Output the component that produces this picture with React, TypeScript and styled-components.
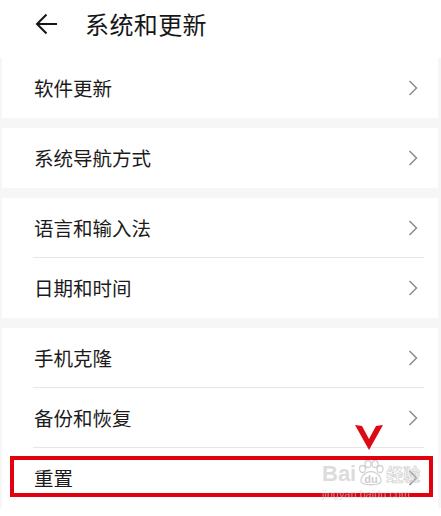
import React from 'react';
import styled, { createGlobalStyle } from 'styled-components';

const GlobalStyle = createGlobalStyle`
    html, body {
        margin: 0;
        padding: 0;
        background: #ffffff;
    }
    body {
        font-family: "Noto Sans CJK SC", "Noto Sans", sans-serif;
        color: #1b1b1b;
    }
`;

const Page = styled.div`
    width: 441px;
    height: 516px;
    overflow: hidden;
    background: #ffffff;
`;

const Header = styled.div`
    height: 58px;
    display: flex;
    align-items: center;
    padding: 0 0 10px 35px;
    box-sizing: border-box;
    gap: 26px;
`;

const Title = styled.div`
    font-size: 24px;
    line-height: 1;
    letter-spacing: 0.4px;
    color: #161616;
`;

const List = styled.div`
    display: flex;
    flex-direction: column;
    gap: 10px;
    background: #f6f6f6;
    padding: 0 3px 0 2px;
`;

const Group = styled.div`
    background: #ffffff;
    display: flex;
    flex-direction: column;
`;

const Row = styled.div<{ divider?: boolean }>`
    position: relative;
    height: 60px;
    display: flex;
    align-items: center;
    justify-content: space-between;
    padding: 0 20px 0 32px;
    &::after {
        content: '';
        display: ${({ divider }) => (divider ? 'block' : 'none')};
        position: absolute;
        left: 31px;
        right: 14px;
        bottom: 0;
        height: 1px;
        background: #e6e6e6;
    }
`;

const Label = styled.span`
    font-size: 19.5px;
    line-height: 1;
    color: #1b1b1b;
`;

const Highlight = styled.div`
    position: absolute;
    left: 8px;
    right: 5px;
    top: 8px;
    bottom: 11px;
    border: 4px solid #e3000e;
`;

const Marker = styled.svg`
    position: absolute;
    left: 353px;
    top: -23px;
`;

const Watermark = styled.div`
    position: absolute;
    left: 320px;
    top: 12px;
    display: flex;
    flex-direction: column;
    align-items: flex-start;
    color: rgba(205, 205, 205, 0.7);
    font-family: "Liberation Sans", sans-serif;
    pointer-events: none;
`;

const MarkLine = styled.div`
    display: flex;
    align-items: center;
    gap: 2px;
    font-size: 22px;
    font-weight: bold;
    line-height: 1;
`;

const Jing = styled.span`
    font-family: "Noto Sans CJK SC", sans-serif;
    font-size: 17px;
    color: transparent;
    -webkit-text-stroke: 0.8px rgba(200, 200, 200, 0.8);
`;

const Domain = styled.span`
    font-size: 10.5px;
    letter-spacing: 0.2px;
    margin-top: 1px;
`;

const Chevron = () => (
    <svg width="10" height="16" viewBox="0 0 10 16">
        <path d="M1.5 1 L8.5 8 L1.5 15" fill="none" stroke="#8c8c8c" strokeWidth="1.5" />
    </svg>
);

const BackArrow = () => (
    <svg width="24" height="24" viewBox="0 0 24 24">
        <path d="M22 12 H2.5 M11.5 2.5 L2 12 L11.5 21.5" fill="none" stroke="#151515" strokeWidth="2" />
    </svg>
);

const Paw = () => (
    <svg width="26" height="27" viewBox="0 0 26 27">
        <g fill="none" stroke="rgba(200,200,200,0.8)" strokeWidth="1.3">
            <ellipse cx="4.5" cy="9" rx="3" ry="3.5" />
            <ellipse cx="10" cy="4" rx="3" ry="3.5" />
            <ellipse cx="17" cy="4" rx="3" ry="3.5" />
            <ellipse cx="22" cy="9" rx="3" ry="3.5" />
            <path d="M3 21 C3 15 9 11.5 13 11.5 C17 11.5 23 15 23 21 C23 26 3 26 3 21 Z" />
        </g>
        <text x="13" y="23" textAnchor="middle" fontSize="11" fontWeight="bold" fill="rgba(195,195,195,0.85)" fontFamily="Liberation Sans, sans-serif">du</text>
    </svg>
);

const groups: string[][] = [
    ['软件更新'],
    ['系统导航方式'],
    ['语言和输入法', '日期和时间'],
    ['手机克隆', '备份和恢复', '重置'],
];

export default function App() {
    return (
        <Page>
            <GlobalStyle />
            <Header>
                <BackArrow />
                <Title>系统和更新</Title>
            </Header>
            <List>
                {groups.map((items, gi) => (
                    <Group key={gi}>
                        {items.map((label, i) => {
                            const isReset = label === '重置';
                            return (
                                <Row key={label} divider={i < items.length - 1}>
                                    <Label>{label}</Label>
                                    <Chevron />
                                    {isReset && (
                                        <>
                                            <Highlight />
                                            <Marker width="28" height="25" viewBox="0 0 28 25">
                                                <polygon points="0,0 7,1 14,14 21,1 28,0 14,25" fill="#dc0a14" />
                                            </Marker>
                                            <Watermark>
                                                <MarkLine>
                                                    <span>Bai</span>
                                                    <Paw />
                                                    <Jing>经验</Jing>
                                                </MarkLine>
                                                <Domain>jingyan.baidu.com</Domain>
                                            </Watermark>
                                        </>
                                    )}
                                </Row>
                            );
                        })}
                    </Group>
                ))}
            </List>
        </Page>
    );
}
